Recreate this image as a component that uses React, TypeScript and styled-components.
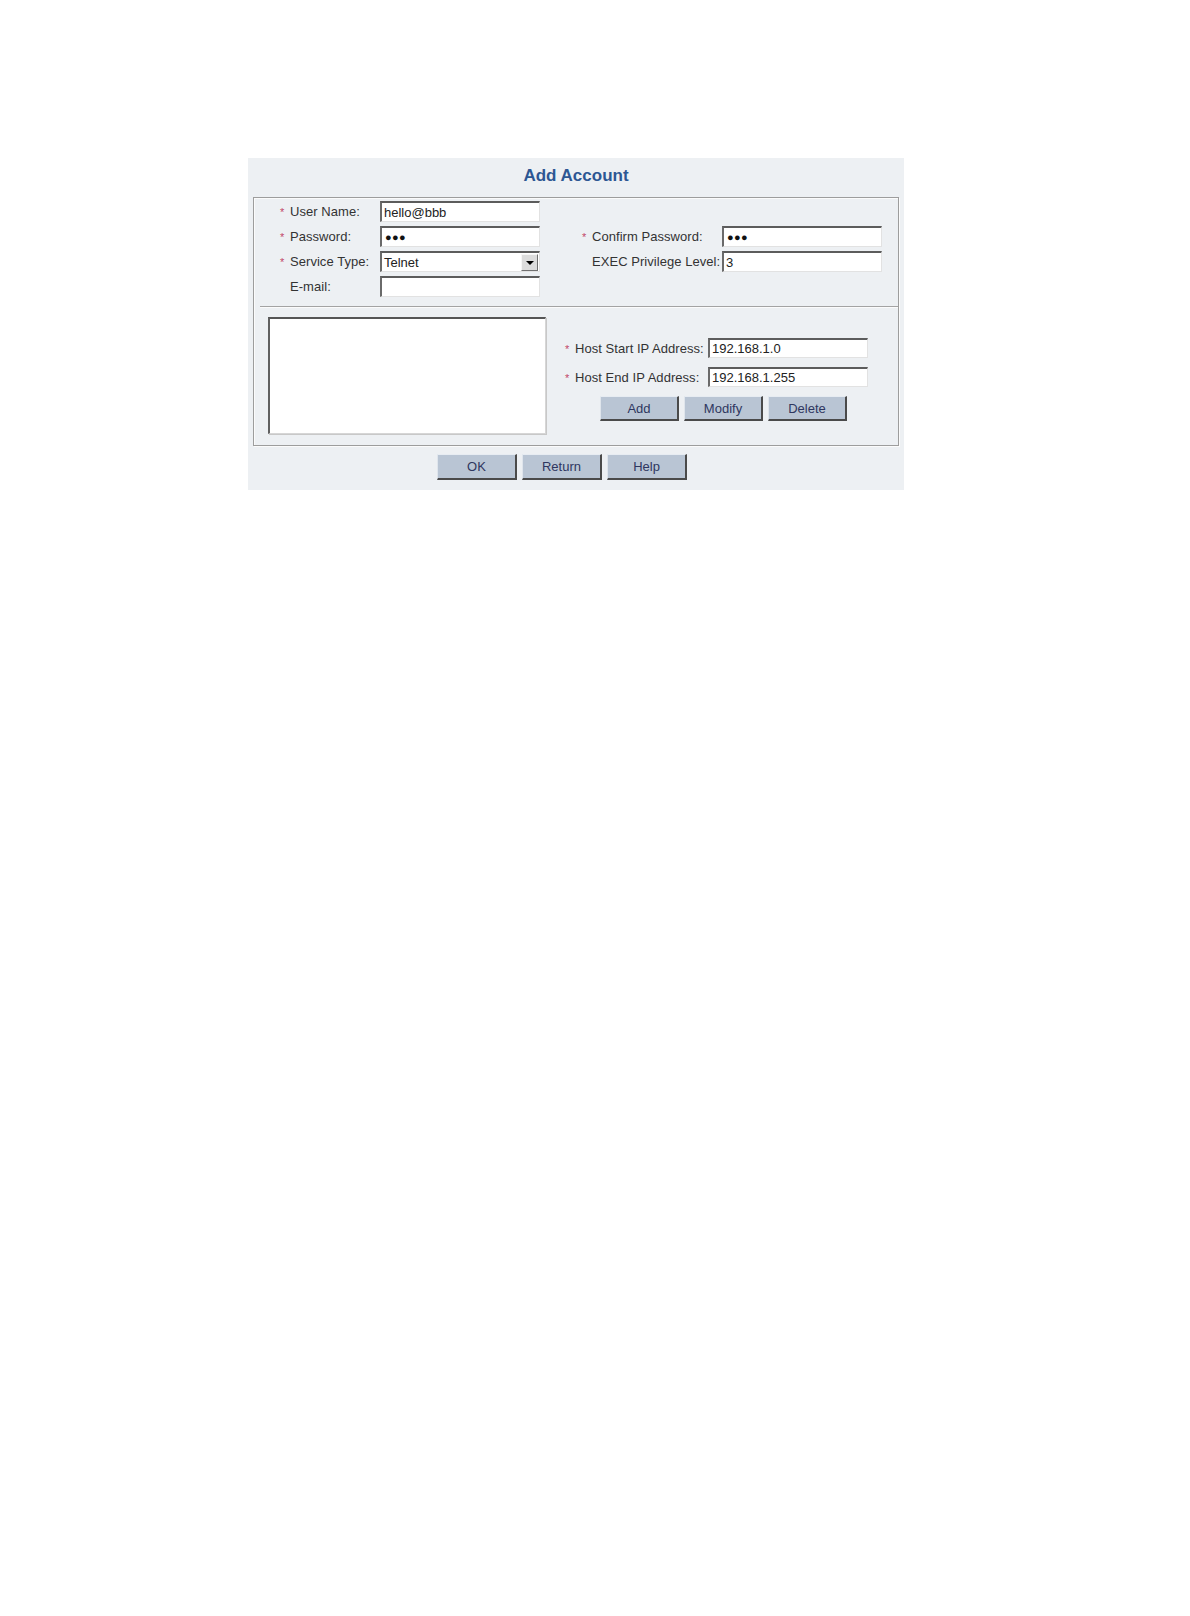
import React from 'react';
import styled, { createGlobalStyle } from 'styled-components';

const GlobalStyle = createGlobalStyle`
  html, body {
    margin: 0;
    padding: 0;
    background: #ffffff;
  }
  body {
    font-family: 'Liberation Sans', Arial, sans-serif;
  }
`;

const Page = styled.div`
  width: 1190px;
  min-height: 1616px;
  padding-top: 158px;
  padding-left: 248px;
  box-sizing: border-box;
`;

const Panel = styled.div`
  width: 656px;
  background: #edf0f3;
  padding: 0 5px 10px 5px;
  box-sizing: border-box;
`;

const Title = styled.h2`
  margin: 0;
  height: 34px;
  line-height: 35px;
  text-align: center;
  font-size: 17px;
  font-weight: 700;
  color: #2d5793;
`;

const Box = styled.div`
  margin-top: 5px;
  border: 1px solid #9d9d9d;
  box-shadow: inset 1px 1px 0 #fbfbfb, 1px 1px 0 #fbfbfb;
`;

const TopGrid = styled.div`
  display: grid;
  grid-template-columns: 100px 160px 182px 160px;
  row-gap: 4px;
  align-items: center;
  padding: 3px 16px 9px 26px;
`;

const Label = styled.div<{ $col?: number; $row?: number; $indent?: number }>`
  grid-column: ${p => p.$col ?? 1};
  grid-row: ${p => p.$row ?? 'auto'};
  padding-left: ${p => p.$indent ?? 0}px;
  font-size: 13px;
  color: #333333;
  white-space: nowrap;
  letter-spacing: 0.05px;
`;

const Star = styled.span<{ $hidden?: boolean }>`
  display: inline-block;
  width: 10px;
  font-size: 11px;
  color: #c24668;
  visibility: ${p => (p.$hidden ? 'hidden' : 'visible')};
`;

const Field = styled.div<{ $col?: number; $row?: number; $h?: number }>`
  grid-column: ${p => p.$col ?? 2};
  grid-row: ${p => p.$row ?? 'auto'};
  position: relative;
  height: ${p => p.$h ?? 21}px;
  width: 160px;
  box-sizing: border-box;
  background: #ffffff;
  border-style: solid;
  border-width: 2px 1px 1px 2px;
  border-color: #5c5c5c #e2e2e2 #e2e2e2 #6a6a6a;
  display: flex;
  align-items: center;
  padding-left: 2px;
  font-size: 13px;
  color: #222222;
  overflow: hidden;
`;

const Dots = styled.span`
  font-size: 11px;
  letter-spacing: 0.3px;
  color: #111111;
  padding-left: 1px;
`;

const DropButton = styled.span`
  position: absolute;
  top: 1px;
  right: 1px;
  width: 15px;
  height: 15px;
  background: #dcdcdc;
  border: 1px solid;
  border-color: #f6f6f6 #707070 #707070 #f6f6f6;
  display: flex;
  align-items: center;
  justify-content: center;

  &::after {
    content: '';
    border-left: 4px solid transparent;
    border-right: 4px solid transparent;
    border-top: 4px solid #000000;
    margin-top: 1px;
  }
`;

const Divider = styled.div`
  margin-left: 6px;
  border-top: 1px solid #a3a3a3;
  border-bottom: 1px solid #fbfbfb;
`;

const BottomRow = styled.div`
  display: flex;
  align-items: flex-start;
  padding: 9px 0 11px 14px;
`;

const ListBox = styled.div`
  width: 278px;
  height: 117px;
  box-sizing: border-box;
  background: #ffffff;
  border-style: solid;
  border-width: 2px 1px 1px 2px;
  border-color: #555555 #d6d6d6 #d6d6d6 #606060;
  box-shadow: 1px 1px 0 #c8c8c8;
`;

const HostPart = styled.div`
  margin-left: 19px;
  margin-top: 21px;
  display: grid;
  grid-template-columns: 143px 160px;
  row-gap: 9px;
  align-items: center;
`;

const ButtonRow = styled.div<{ $indent: number; $span?: boolean }>`
  grid-column: ${p => (p.$span ? '1 / span 2' : 'auto')};
  display: flex;
  gap: 5px;
  padding-left: ${p => p.$indent}px;
`;

const Button = styled.button`
  width: 79px;
  height: 25px;
  padding: 0;
  box-sizing: border-box;
  background: #b9c5d4;
  border-style: solid;
  border-width: 1px 2px 2px 1px;
  border-color: #e7ecf2 #4a4a4a #4a4a4a #dfe5ec;
  font-family: 'Liberation Sans', Arial, sans-serif;
  font-size: 13px;
  color: #2f3760;
  cursor: pointer;
`;

const FooterButtons = styled.div`
  display: flex;
  gap: 5px;
  padding: 8px 0 0 184px;
`;

const FooterButton = styled(Button)`
  width: 80px;
  height: 26px;
`;

const topRows = [
  { label: 'User Name:', value: 'hello@bbb', required: true },
  { label: 'Password:', value: 'password', required: true },
  { label: 'Service Type:', value: 'select', required: true },
  { label: 'E-mail:', value: '', required: false },
];

export default function App() {
  return (
    <Page>
      <GlobalStyle />
      <Panel>
        <Title>Add Account</Title>
        <Box>
          <TopGrid>
            {topRows.map((r, i) => (
              <React.Fragment key={r.label}>
                <Label $col={1} $row={i + 1}>
                  <Star $hidden={!r.required}>*</Star>
                  {r.label}
                </Label>
                <Field $col={2} $row={i + 1}>
                  {r.value === 'password' ? (
                    <Dots>●●●</Dots>
                  ) : r.value === 'select' ? (
                    <>
                      Telnet
                      <DropButton />
                    </>
                  ) : (
                    r.value
                  )}
                </Field>
              </React.Fragment>
            ))}
            <Label $col={3} $row={2} $indent={42}>
              <Star>*</Star>
              Confirm Password:
            </Label>
            <Field $col={4} $row={2}>
              <Dots>●●●</Dots>
            </Field>
            <Label $col={3} $row={3} $indent={42}>
              <Star $hidden>*</Star>
              EXEC Privilege Level:
            </Label>
            <Field $col={4} $row={3}>3</Field>
          </TopGrid>
          <Divider />
          <BottomRow>
            <ListBox />
            <HostPart>
              <Label $col={1}>
                <Star>*</Star>
                Host Start IP Address:
              </Label>
              <Field $col={2} $h={20}>192.168.1.0</Field>
              <Label $col={1}>
                <Star>*</Star>
                Host End IP Address:
              </Label>
              <Field $col={2} $h={20}>192.168.1.255</Field>
              <ButtonRow $indent={35} $span>
                <Button>Add</Button>
                <Button>Modify</Button>
                <Button>Delete</Button>
              </ButtonRow>
            </HostPart>
          </BottomRow>
        </Box>
        <FooterButtons>
          <FooterButton>OK</FooterButton>
          <FooterButton>Return</FooterButton>
          <FooterButton>Help</FooterButton>
        </FooterButtons>
      </Panel>
    </Page>
  );
}
